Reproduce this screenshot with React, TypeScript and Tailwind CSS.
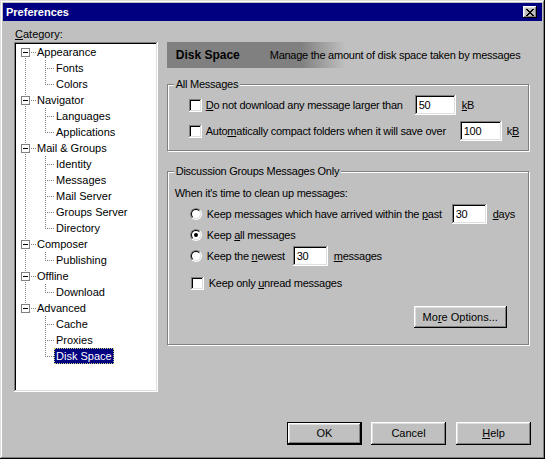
import React from 'react';

//win98 bevels
const raised = 'bg-[#c0c0c0] shadow-[inset_-1px_-1px_#000,inset_1px_1px_#fff,inset_-2px_-2px_#808080,inset_2px_2px_#dfdfdf]';
const sunken = 'bg-white shadow-[inset_-1px_-1px_#fff,inset_1px_1px_#808080,inset_-2px_-2px_#dfdfdf,inset_2px_2px_#000]';

const tree = [
  { label: 'Appearance', children: ['Fonts', 'Colors'] },
  { label: 'Navigator', children: ['Languages', 'Applications'] },
  { label: 'Mail & Groups', children: ['Identity', 'Messages', 'Mail Server', 'Groups Server', 'Directory'] },
  { label: 'Composer', children: ['Publishing'] },
  { label: 'Offline', children: ['Download'] },
  { label: 'Advanced', children: ['Cache', 'Proxies', 'Disk Space'] },
];

function RootGlyph({ first, last }: { first: boolean; last: boolean }) {
  return (
    <svg width="21" height="16" className="shrink-0" shapeRendering="crispEdges">
      <line x1="9.5" y1={first ? 8 : 0} x2="9.5" y2={last ? 8 : 16} stroke="#808080" strokeDasharray="1 1" />
      <rect x="5.5" y="4.5" width="8" height="8" fill="#fff" stroke="#808080" />
      <line x1="7" y1="8.5" x2="12" y2="8.5" stroke="#000" />
      <line x1="15" y1="8.5" x2="20" y2="8.5" stroke="#808080" strokeDasharray="1 1" />
    </svg>
  );
}

function ChildGlyph({ root, last }: { root: boolean; last: boolean }) {
  return (
    <svg width="38" height="16" className="shrink-0" shapeRendering="crispEdges">
      {root && <line x1="9.5" y1="0" x2="9.5" y2="16" stroke="#808080" strokeDasharray="1 1" />}
      <line x1="29.5" y1="0" x2="29.5" y2={last ? 9 : 16} stroke="#808080" strokeDasharray="1 1" />
      <line x1="31" y1="8.5" x2="38" y2="8.5" stroke="#808080" strokeDasharray="1 1" />
    </svg>
  );
}

function Check() {
  return <span className={`w-[13px] h-[13px] shrink-0 ${sunken}`} />;
}

function Radio({ on }: { on?: boolean }) {
  return (
    <span className="w-[12px] h-[12px] shrink-0 rounded-full border border-t-[#808080] border-l-[#808080] border-r-white border-b-white">
      <span className="flex items-center justify-center w-full h-full rounded-full bg-white border border-t-black border-l-black border-r-[#dfdfdf] border-b-[#dfdfdf]">
        {on && <span className="w-[4px] h-[4px] rounded-full bg-black" />}
      </span>
    </span>
  );
}

function Field({ value, w }: { value: string; w: string }) {
  return (
    <span className={`flex items-center h-[20px] pl-[4px] shrink-0 ${w} ${sunken}`}>{value}</span>
  );
}

function Group({ title, className, children }: { title: string; className: string; children: React.ReactNode }) {
  return (
    <div className={`relative flex flex-col w-[362px] border border-[#808080] shadow-[inset_1px_1px_#fff,1px_1px_#fff] ${className}`}>
      <span className="absolute -top-[7px] left-[6px] px-[2px] bg-[#c0c0c0]">{title}</span>
      {children}
    </div>
  );
}

export default function App() {
  const XPix = [
    [0, 0], [1, 0], [6, 0], [7, 0],
    [1, 1], [2, 1], [5, 1], [6, 1],
    [2, 2], [3, 2], [4, 2], [5, 2],
    [3, 3], [4, 3],
    [2, 4], [3, 4], [4, 4], [5, 4],
    [1, 5], [2, 5], [5, 5], [6, 5],
    [0, 6], [1, 6], [6, 6], [7, 6],
  ];

  return (
    <div className="font-['Liberation_Sans',Arial,sans-serif] text-[11px] leading-[13px] text-black whitespace-nowrap">
      <div className="flex flex-col w-[545px] h-[459px] p-[3px] bg-[#c0c0c0] shadow-[inset_-1px_-1px_#000,inset_1px_1px_#dfdfdf,inset_-2px_-2px_#808080,inset_2px_2px_#fff]">
        {/* title bar */}
        <div className="flex items-center h-[18px] pl-[3px] pr-[5px] bg-[#000080] text-white">
          <span className="font-bold">Preferences</span>
          <span className={`ml-auto flex items-center justify-center w-[14px] h-[12px] ${raised}`}>
            <svg width="8" height="7" shapeRendering="crispEdges">
              {XPix.map(([x, y]) => (
                <rect key={`${x}-${y}`} x={x} y={y} width="1" height="1" fill="#000" />
              ))}
            </svg>
          </span>
        </div>

        <div className="flex-1 flex gap-[9px] px-[11px]">
          {/* category tree */}
          <div className="flex flex-col w-[144px] pt-[7px]">
            <span className="ml-[1px]"><u>C</u>ategory:</span>
            <div className={`mt-[1px] h-[350px] p-[2px] ${sunken}`}>
              {tree.map((node, i) => (
                <div key={node.label}>
                  <div className="flex items-center h-[16px]">
                    <RootGlyph first={i === 0} last={i === tree.length - 1} />
                    <span>{node.label}</span>
                  </div>
                  {node.children.map((c, j) => (
                    <div key={c} className="flex items-center h-[16px]">
                      <ChildGlyph root={i !== tree.length - 1} last={j === node.children.length - 1} />
                      {c === 'Disk Space' ? (
                        <span className="flex items-center h-[16px] px-[2px] bg-[#000080] text-white outline-1 outline-dotted -outline-offset-1 outline-[#c8c870]">{c}</span>
                      ) : (
                        <span className="px-[2px]">{c}</span>
                      )}
                    </div>
                  ))}
                </div>
              ))}
            </div>
          </div>

          {/* settings panel */}
          <div className="flex flex-col w-[365px] pt-[21px] tracking-[-0.25px]">
            <div className="flex items-center h-[26px] pl-[9px] bg-[linear-gradient(to_right,#808080_37%,#c0c0c0_49%)]">
              <span className="w-[94px] font-bold text-[12px] tracking-normal">Disk Space</span>
              <span>Manage the amount of disk space taken by messages</span>
            </div>

            <Group title="All Messages" className="mt-[16px] pt-[10px] pb-[9px] pl-[21px]">
              <div className="flex items-center h-[20px]">
                <Check />
                <span className="ml-[4px] w-[209px]"><u>D</u>o not download any message larger than</span>
                <Field value="50" w="w-[41px]" />
                <span className="ml-[6px]"><u>k</u>B</span>
              </div>
              <div className="flex items-center h-[20px] mt-[6px]">
                <Check />
                <span className="ml-[4px] w-[254px]">Auto<u>m</u>atically compact folders when it will save over</span>
                <Field value="100" w="w-[42px]" />
                <span className="ml-[5px]">k<u>B</u></span>
              </div>
            </Group>

            <Group title="Discussion Groups Messages Only" className="mt-[20px] pt-[15px] pb-[16px] pl-[7px]">
              <span>When it's time to clean up messages:</span>
              <div className="flex items-center h-[20px] mt-[4px] ml-[15px]">
                <Radio />
                <span className="ml-[5px] w-[245px]">Keep messages which have arrived within the <u>p</u>ast</span>
                <Field value="30" w="w-[35px]" />
                <span className="ml-[6px]"><u>d</u>ays</span>
              </div>
              <div className="flex items-center h-[20px] mt-[1px] ml-[15px]">
                <Radio on />
                <span className="ml-[5px]">Keep <u>a</u>ll messages</span>
              </div>
              <div className="flex items-center h-[20px] mt-[1px] ml-[15px]">
                <Radio />
                <span className="ml-[5px] w-[86px]">Keep the <u>n</u>ewest</span>
                <Field value="30" w="w-[35px]" />
                <span className="ml-[6px]"><u>m</u>essages</span>
              </div>
              <div className="flex items-center h-[20px] mt-[7px] ml-[16px]">
                <Check />
                <span className="ml-[5px]">Keep only <u>u</u>nread messages</span>
              </div>
              <button className={`self-end mt-[13px] mr-[21px] w-[93px] h-[22px] tracking-normal ${raised}`}>
                Mo<u>r</u>e Options...
              </button>
            </Group>
          </div>
        </div>

        {/* dialog buttons */}
        <div className="flex justify-end gap-[9px] pr-[11px] pb-[11px]">
          <button className={`w-[75px] h-[23px] border border-black ${raised}`}>OK</button>
          <button className={`w-[75px] h-[23px] ${raised}`}>Cancel</button>
          <button className={`ml-[1px] w-[75px] h-[23px] ${raised}`}><u>H</u>elp</button>
        </div>
      </div>
    </div>
  );
}
